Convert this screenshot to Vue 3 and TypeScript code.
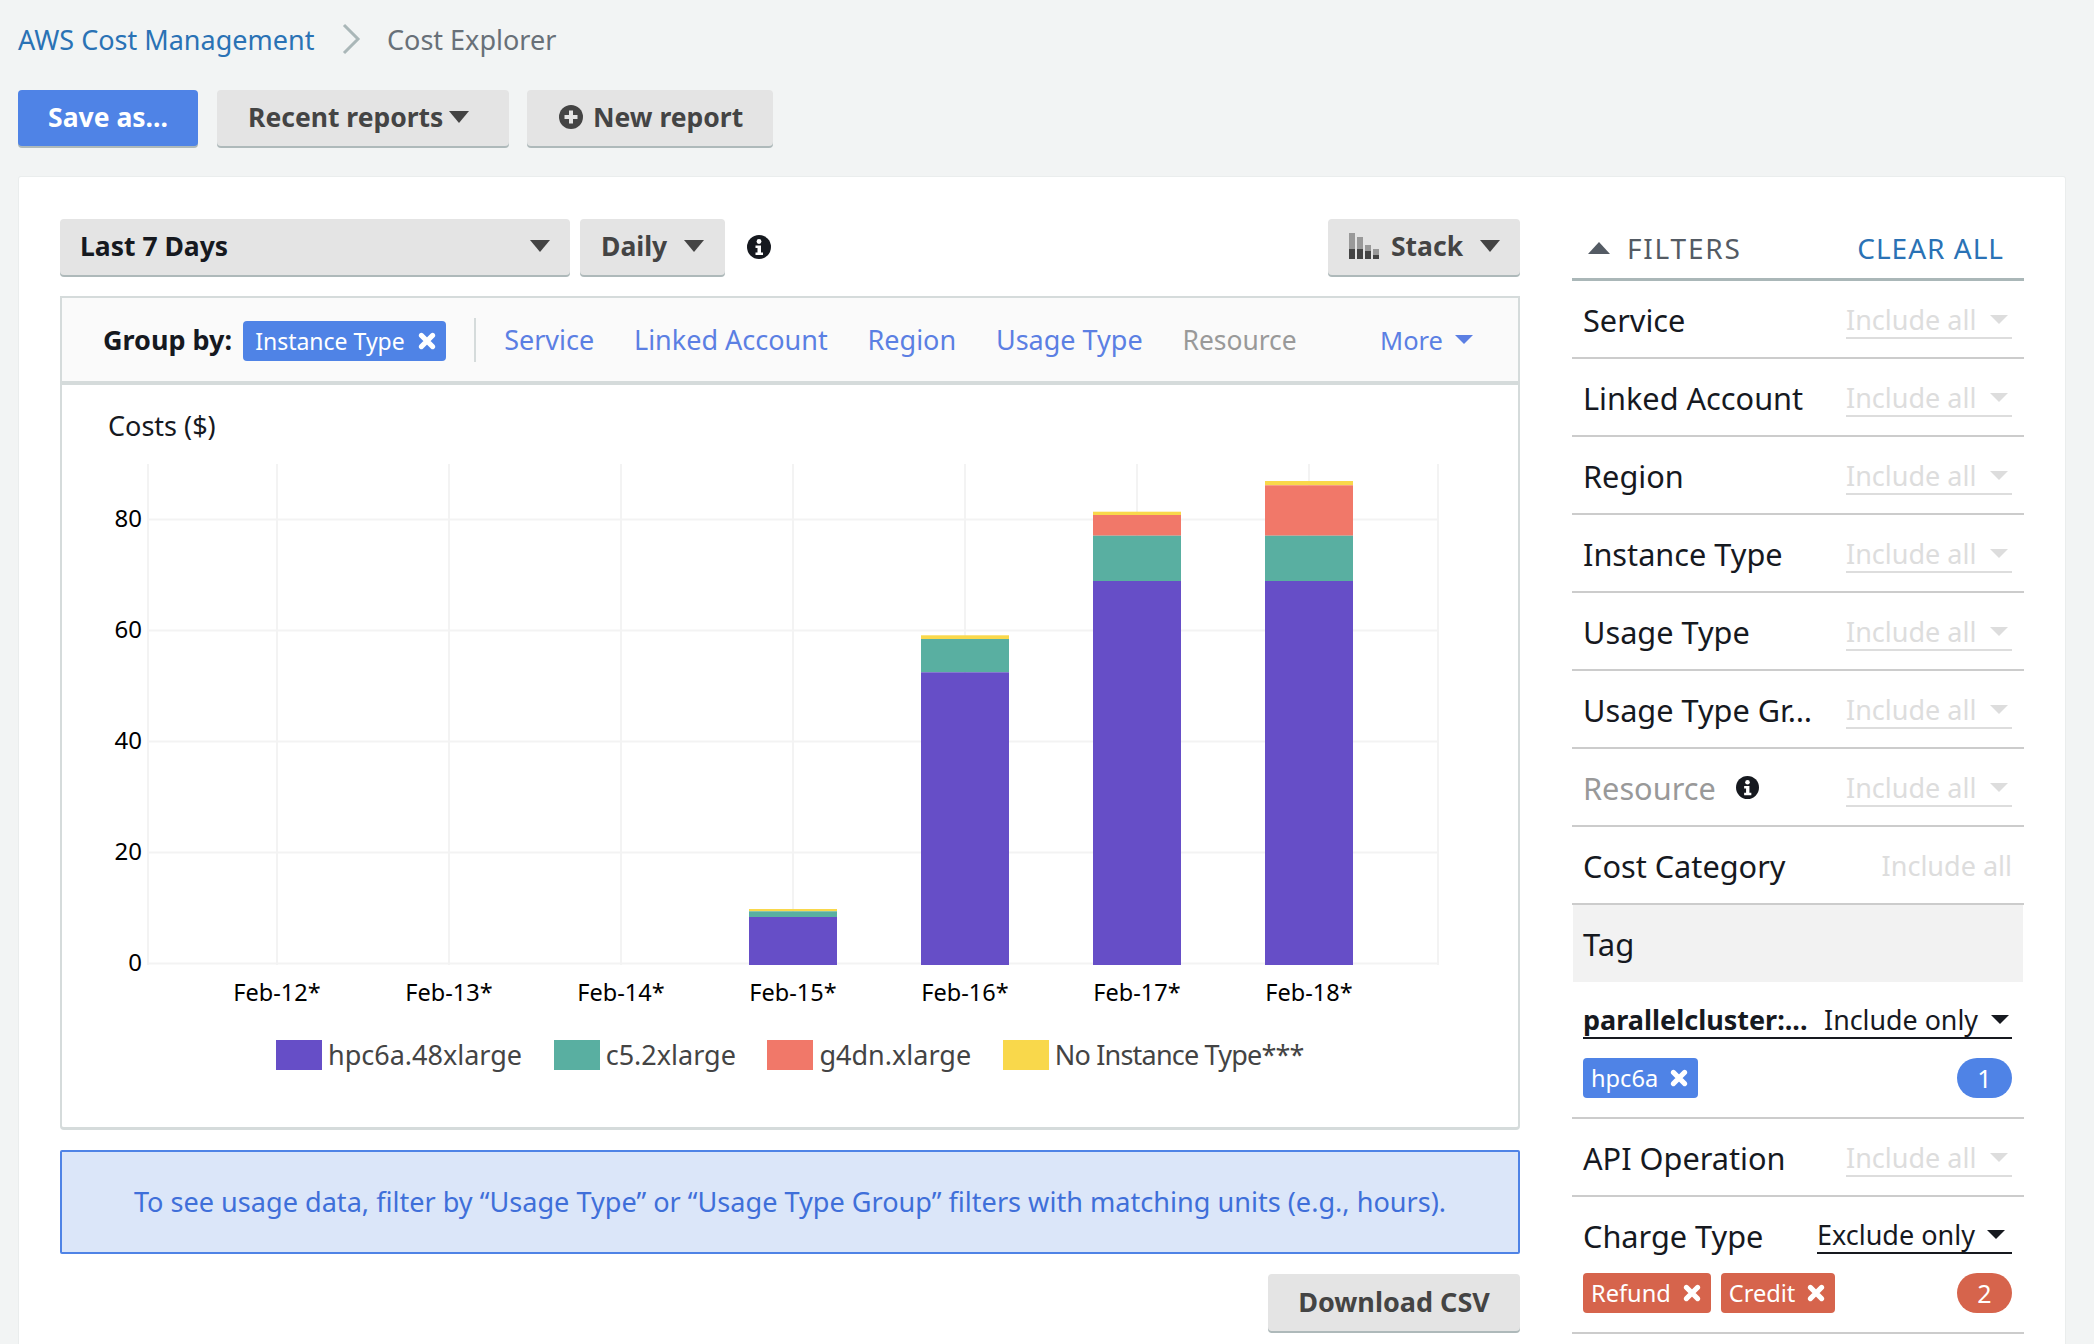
<script setup lang="ts">
interface Segment { y: number; h: number; c: string }
interface Bar { x: number; segs: Segment[] }

const PURPLE = '#664ec7'
const TEAL = '#59afa1'
const RED = '#f17869'
const YELLOW = '#f9d84b'

const base = 965
function stack(x: number, tops: [number, string][]): Bar {
  const segs: Segment[] = tops.map(([t, c], i) => {
    const bottom = i + 1 < tops.length ? tops[i + 1][0] : base
    return { y: t, h: bottom - t, c }
  })
  return { x, segs }
}

const bars: Bar[] = [
  stack(749, [[909, YELLOW], [911.3, TEAL], [917, PURPLE]]),
  stack(921, [[635.3, YELLOW], [639, TEAL], [672.3, PURPLE]]),
  stack(1093, [[511.7, YELLOW], [515, RED], [535.7, TEAL], [581, PURPLE]]),
  stack(1265, [[481, YELLOW], [485.3, RED], [535.7, TEAL], [581, PURPLE]]),
]
const vLines = [148, 277, 449, 621, 793, 965, 1137, 1309, 1438]
const hLines = [
  { y: 519.5, t: '80' },
  { y: 630.5, t: '60' },
  { y: 741.5, t: '40' },
  { y: 852.5, t: '20' },
  { y: 963.5, t: '0' },
]
const dates = ['Feb-12*', 'Feb-13*', 'Feb-14*', 'Feb-15*', 'Feb-16*', 'Feb-17*', 'Feb-18*']
const legend = [
  { c: PURPLE, t: 'hpc6a.48xlarge' },
  { c: TEAL, t: 'c5.2xlarge' },
  { c: RED, t: 'g4dn.xlarge' },
  { c: YELLOW, t: 'No Instance Type***' },
]
const links = ['Service', 'Linked Account', 'Region', 'Usage Type']
const topFilters = ['Service', 'Linked Account', 'Region', 'Instance Type', 'Usage Type', 'Usage Type Gr…']
</script>

<template>
  <div class="page">
    <nav class="crumbs">
      <a class="crumb-link">AWS Cost Management</a>
      <svg class="crumb-sep" width="20" height="32" viewBox="0 0 20 32"><path d="M3 2 L17 16 L3 30" fill="none" stroke="#aab7b8" stroke-width="3" /></svg>
      <span class="crumb-cur">Cost Explorer</span>
    </nav>

    <div class="actions">
      <button class="btn primary save">Save as...</button>
      <button class="btn recent">Recent reports<i class="caret" /></button>
      <button class="btn newrep">
        <svg width="24" height="24" viewBox="0 0 24 24"><circle cx="12" cy="12" r="12" fill="#444" /><path d="M12 5.5v13M5.5 12h13" stroke="#e4e4e4" stroke-width="4" /></svg>
        New report
      </button>
    </div>

    <section class="card">
      <div class="main">
        <div class="toolbar">
          <button class="btn range"><span>Last 7 Days</span><i class="caret" /></button>
          <button class="btn daily">Daily<i class="caret" /></button>
          <svg class="info" width="24" height="24" viewBox="0 0 24 24"><circle cx="12" cy="12" r="12" fill="#16191f" /><circle cx="12" cy="6.5" r="2.4" fill="#fff" /><path d="M8.5 10.5h5.5v7h2v2.5H8.5v-2.5h2v-4.5h-2z" fill="#fff" /></svg>
          <button class="btn stackbtn">
            <svg width="30" height="26" viewBox="0 0 30 26">
              <path fill="#999" d="M0 0h6v16H0zM8 4h6v12H8zM16 12h6v6h-6zM24 16h6v6h-6z" />
              <path fill="#444" d="M0 16h6v10H0zM8 16h6v10H8zM16 18h6v8h-6zM24 22h6v4h-6z" />
            </svg>
            Stack<i class="caret" />
          </button>
        </div>

        <div class="groupbar">
          <strong class="gb-label">Group by:</strong>
          <span class="chip blue gb-chip">Instance Type<svg class="x" viewBox="0 0 16 16"><path d="M3 3 13 13M13 3 3 13" /></svg></span>
          <span class="divider" />
          <a v-for="l in links" :key="l" class="gb-link">{{ l }}</a>
          <span class="gb-off">Resource</span>
          <a class="gb-link more">More<i class="caret small link" /></a>
        </div>

        <div class="panel">
          <svg class="chart" width="1456" height="640" viewBox="62 385 1456 640">
            <text x="108" y="436" class="t-title">Costs ($)</text>
            <line v-for="x in vLines" :key="x" :x1="x" :x2="x" y1="464" y2="965" class="grid" />
            <line v-for="h in hLines" :key="h.t" x1="148" x2="1438" :y1="h.y" :y2="h.y" class="grid" />
            <text v-for="h in hLines" :key="'l' + h.t" x="142" :y="h.y + 7.5" text-anchor="end" class="t-axis">{{ h.t }}</text>
            <g v-for="b in bars" :key="b.x">
              <rect v-for="s in b.segs" :key="s.y" :x="b.x" :y="s.y" width="88" :height="s.h" :fill="s.c" />
            </g>
            <text v-for="(d, i) in dates" :key="d" :x="277 + i * 172" y="1001" text-anchor="middle" class="t-axis t-date">{{ d }}</text>
          </svg>
          <div class="legend">
            <span v-for="l in legend" :key="l.t" class="leg-item">
              <i class="swatch" :style="{ background: l.c }" />{{ l.t }}
            </span>
          </div>
        </div>

        <div class="alert">To see usage data, filter by “Usage Type” or “Usage Type Group” filters with matching units (e.g., hours).</div>

        <div class="foot"><button class="btn csv">Download CSV</button></div>
      </div>

      <aside class="filters">
        <header class="f-head">
          <i class="caret up" />
          <span class="f-title">FILTERS</span>
          <a class="f-clear">CLEAR ALL</a>
        </header>

        <div v-for="f in topFilters" :key="f" class="f-row">
          <span class="f-label">{{ f }}</span>
          <span class="f-select"><span>Include all</span><i class="caret small pale" /></span>
        </div>
        <div class="f-row">
          <span class="f-label muted">Resource
            <svg class="f-info" width="23" height="23" viewBox="0 0 24 24"><circle cx="12" cy="12" r="12" fill="#16191f" /><circle cx="12" cy="6.5" r="2.4" fill="#fff" /><path d="M8.5 10.5h5.5v7h2v2.5H8.5v-2.5h2v-4.5h-2z" fill="#fff" /></svg>
          </span>
          <span class="f-select"><span>Include all</span><i class="caret small pale" /></span>
        </div>
        <div class="f-row">
          <span class="f-label">Cost Category</span>
          <span class="f-plain">Include all</span>
        </div>

        <div class="tag-head">Tag</div>
        <div class="f-block">
          <div class="b-line full">
            <b class="b-key">parallelcluster:...</b>
            <span class="b-mode">Include only<i class="caret small dark" /></span>
          </div>
          <div class="b-chips">
            <span class="chip blue">hpc6a<svg class="x" viewBox="0 0 16 16"><path d="M3 3 13 13M13 3 3 13" /></svg></span>
            <span class="count blue">1</span>
          </div>
        </div>

        <div class="f-row">
          <span class="f-label">API Operation</span>
          <span class="f-select"><span>Include all</span><i class="caret small pale" /></span>
        </div>

        <div class="f-block">
          <div class="b-line">
            <span class="f-label">Charge Type</span>
            <span class="b-mode under">Exclude only<i class="caret small dark" /></span>
          </div>
          <div class="b-chips">
            <span class="chip red">Refund<svg class="x" viewBox="0 0 16 16"><path d="M3 3 13 13M13 3 3 13" /></svg></span>
            <span class="chip red">Credit<svg class="x" viewBox="0 0 16 16"><path d="M3 3 13 13M13 3 3 13" /></svg></span>
            <span class="count red">2</span>
          </div>
        </div>
      </aside>
    </section>
  </div>
</template>

<style>
html, body { margin: 0; background: #f2f4f4; }
</style>

<style scoped>
.page {
  width: 2094px; height: 1344px; overflow: hidden; box-sizing: border-box;
  background: #f2f4f4; padding: 0 0 0 18px;
  font-family: "Noto Sans", "Open Sans", sans-serif; color: #16191f;
}
.crumbs { height: 78px; display: flex; align-items: center; font-size: 27px; }
.crumb-link { color: #2a72b5; width: 323px; }
.crumb-sep { margin-right: 26px; }
.crumb-cur { color: #687078; }

.btn {
  display: inline-flex; align-items: center; border: 0; border-radius: 4px; padding: 0 0 2px;
  font: 700 26.5px "Noto Sans", sans-serif; color: #444; background: #e4e4e4;
  box-shadow: 0 2px 0 #aeb9ba; height: 56px; box-sizing: border-box;
}
.caret {
  display: inline-block; width: 0; height: 0;
  border-left: 10px solid transparent; border-right: 10px solid transparent; border-top: 12px solid #444;
}
.caret.up { border-top: 0; border-bottom: 12px solid #545b64; border-left-width: 11px; border-right-width: 11px; }
.caret.small { border-left-width: 9px; border-right-width: 9px; border-top-width: 9px; }
.caret.link { border-top-color: #5b7fe3; }
.caret.pale { border-top-color: #ddd; }
.caret.dark { border-top-color: #16191f; }

.actions { display: flex; margin-top: 12px; height: 58px; }
.primary { background: #4f83e6; color: #fff; }
.save { width: 180px; justify-content: center; margin-right: 19px; }
.recent { width: 292px; padding-left: 31px; margin-right: 18px; gap: 6px; }
.newrep { width: 246px; padding-left: 32px; gap: 10px; }

.card {
  margin: 29px 0 0 1px; width: 2046px; height: 1240px; box-sizing: border-box;
  background: #fff; box-shadow: 0 0 0 1px #eaeded; border-radius: 2px;
  padding: 41px 41px 0 41px; display: flex; gap: 52px;
}
.main { width: 1460px; flex: none; }
.toolbar { display: flex; align-items: center; height: 57px; }
.range { width: 510px; justify-content: space-between; padding: 0 20px 2px; color: #16191f; margin-right: 10px; }
.daily { width: 145px; padding-left: 21px; gap: 17px; }
.info { margin-left: 22px; }
.stackbtn { width: 192px; margin-left: auto; padding-left: 21px; gap: 12px; }
.stackbtn .caret { margin-left: 5px; }

.groupbar {
  margin-top: 21px; height: 87px; box-sizing: border-box; border: 2px solid #d5dbdb; border-bottom-width: 2px;
  background: #fafafa; display: flex; align-items: center; padding-left: 41px; font-size: 27px;
}
.gb-label { margin-right: 11px; }
.chip {
  display: inline-flex; align-items: center; height: 40px; border-radius: 4px; padding: 0 10px 0 8px;
  color: #fff; font-size: 23.6px; box-sizing: border-box;
}
.chip.blue { background: #4f83e6; }
.chip.red { background: #d6644c; }
.x { width: 18px; height: 18px; margin-left: 12px; fill: none; stroke: #fff; stroke-width: 4.4; stroke-linecap: round; flex: none; }
.gb-chip { width: 203px; justify-content: space-between; font-size: 23px; padding: 0 10px 0 12px; margin-top: 2px; }
.gb-chip .x { margin-left: 0; }
.divider { width: 2px; height: 44px; background: #d5dbdb; margin: 0 28px 0 28px; }
.gb-link { color: #5b7fe3; margin-right: 39.8px; }
.gb-off { color: #999; font-size: 26.4px; }
.more { margin-left: auto; margin-right: 45px; display: inline-flex; align-items: center; gap: 12px; font-size: 25.5px; }

.panel {
  height: 747px; box-sizing: border-box; border: 2px solid #d5dbdb; border-top-width: 2px; border-bottom-width: 3px;
  border-radius: 0 0 4px 4px;
}
.chart { display: block; }
.grid { stroke: #f3f3f3; stroke-width: 2; }
.t-title { font: 400 27px "Noto Sans", sans-serif; fill: #16191f; }
.t-axis { font: 400 24px "Noto Sans", sans-serif; fill: #000; }
.t-date { font-size: 23.5px; }
.legend { margin-top: 15px; height: 30px; display: flex; padding-left: 214px; gap: 31.6px; font-size: 27px; color: #444; }
.leg-item { display: flex; align-items: center; gap: 6px; line-height: 26px; padding-bottom: 0; }
.leg-item:last-child { letter-spacing: -0.8px; }
.swatch { width: 46px; height: 30px; display: block; }

.alert {
  margin-top: 20px; height: 104px; box-sizing: border-box; border: 2px solid #4f83e6; background: #dbe6f9; padding-bottom: 2px;
  border-radius: 2px; display: flex; align-items: center; justify-content: center; color: #3f6fd9; font-size: 27.1px;
}
.foot { margin-top: 20px; display: flex; justify-content: flex-end; }
.csv { width: 252px; height: 57px; justify-content: center; font-size: 27px; }

.filters { width: 452px; flex: none; }
.f-head {
  height: 63px; box-sizing: border-box; border-bottom: 3px solid #aab7b8; display: flex; align-items: center;
  padding: 0 20px 0 16px; font-size: 28px; margin-top: 0;
}
.f-title { color: #545b64; margin-left: 17px; letter-spacing: 1.8px; }
.f-clear { color: #2a72b5; margin-left: auto; letter-spacing: 1px; }
.f-row {
  height: 78px; box-sizing: border-box; border-bottom: 2px solid #ccc; display: flex; align-items: center;
  justify-content: space-between; padding: 0 12px 0 11px;
}
.f-label { font-size: 30.7px; line-height: 42px; padding-top: 1px; color: #16191f; white-space: nowrap; display: inline-flex; align-items: center; }
.f-label.muted { color: #999; }
.f-info { margin-left: 20px; }
.f-select {
  width: 166px; height: 38px; box-sizing: border-box; border-bottom: 2px solid #ddd; display: flex; align-items: center;
  justify-content: space-between; color: #ddd; font-size: 27px; padding-right: 4px; margin-top: 2px;
}
.f-plain { color: #ddd; font-size: 27px; }
.tag-head {
  height: 77px; margin: 0 1px; background: #f2f2f2; display: flex; align-items: center; padding-left: 10px; font-size: 31px;
}
.f-block { height: 137px; box-sizing: border-box; border-bottom: 2px solid #ccc; padding: 19px 12px 0 11px; }
.b-line { height: 38px; display: flex; align-items: center; justify-content: space-between; }
.b-line.full { border-bottom: 2px solid #16191f; box-sizing: border-box; }
.b-key { font-size: 27px; }
.b-mode { font-size: 26.8px; display: inline-flex; align-items: center; gap: 13px; padding-right: 3px; }
.b-mode.under { width: 195px; height: 38px; box-sizing: border-box; border-bottom: 2px solid #16191f; font-size: 27px; gap: 12px; }
.b-chips { margin-top: 19px; display: flex; gap: 10px; align-items: center; }
.count {
  margin-left: auto; width: 55px; height: 40px; border-radius: 20px; color: #fff; font-size: 25px;
  display: flex; align-items: center; justify-content: center;
}
.count.blue { background: #4f83e6; }
.count.red { background: #d6644c; }
</style>
